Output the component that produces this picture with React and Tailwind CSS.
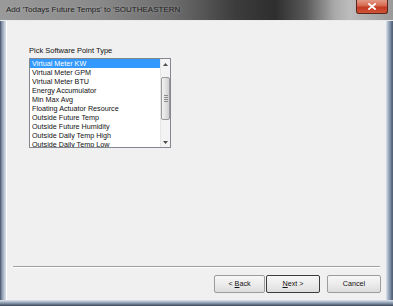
export default function App() {
  const items = [
    "Virtual Meter KW",
    "Virtual Meter GPM",
    "Virtual Meter BTU",
    "Energy Accumulator",
    "Min Max Avg",
    "Floating Actuator Resource",
    "Outside Future Temp",
    "Outside Future Humidity",
    "Outside Daily Temp High",
    "Outside Daily Temp Low",
  ];
  return (
    <div className="w-[393px] h-[306px] flex flex-col overflow-hidden bg-[#6f7f96] font-['Liberation_Sans',Arial,sans-serif] text-black">
      {/* Title bar */}
      <div className="h-[20px] flex items-start justify-between bg-[linear-gradient(90deg,#9a9a9a_0%,#8a8a8a_25%,#6a6a6a_45%,#3c3c3c_60%,#2e2e2e_70%,#5a5a5a_78%,#a8a8a8_85%,#bdbdbd_89%,#9a9a9a_100%)]">
        <div className="pl-[6px] pt-[5px] text-[8px] leading-[10px] text-[#1b1b1b] whitespace-nowrap [text-shadow:0_0_3px_rgba(255,255,255,0.35)]">
          Add 'Todays Future Temps' to 'SOUTHEASTERN
        </div>
        <div className="mr-[5px] w-[32px] h-[14px] rounded-b-[3px] border border-t-0 border-[#5c241b] bg-[linear-gradient(180deg,#e39a86_0%,#d5674f_45%,#c2391f_55%,#d0553a_100%)] flex items-center justify-center">
          <svg width="8" height="7" viewBox="0 0 8 7">
            <path d="M1 1 L7 6 M7 1 L1 6" stroke="#ffffff" strokeWidth="1.8" strokeLinecap="square" />
          </svg>
        </div>
      </div>
      {/* Body row */}
      <div className="flex flex-1 bg-[#e7ebf0] pt-[1px]">
        {/* Left frame */}
        <div className="w-[6px] bg-[linear-gradient(90deg,#4e5c70_0px,#5e6d83_1px,#8e9db2_2px,#b0bccb_4px,#d2d9e2_5px)]" />
        {/* Client */}
        <div className="w-[380px] h-[279px] bg-[#f0f0f0] border-l border-white flex flex-col">
          <div className="ml-[22px] mt-[25px] text-[7.5px] leading-[9px] whitespace-nowrap text-[#111]">
            Pick Software Point Type
          </div>
          <div className="ml-[22px] mt-[3px] w-[142px] h-[90px] border border-[#828790] bg-white flex">
            <div className="flex-1 overflow-hidden">
              {items.map((t, i) => (
                <div
                  key={t}
                  className={
                    i === 0
                      ? "h-[9px] leading-[9px] pl-[2px] text-[7.2px] whitespace-nowrap bg-[#3399ff] text-white"
                      : "h-[9px] leading-[9px] pl-[2px] text-[7.2px] whitespace-nowrap text-[#111]"
                  }
                >
                  {t}
                </div>
              ))}
            </div>
            <div className="w-[10px] bg-[#f3f3f3] border-l border-[#e6e6e6] flex flex-col items-center">
              <div className="h-[10px] flex items-center justify-center">
                <svg width="5" height="3" viewBox="0 0 5 3">
                  <path d="M0 3 L2.5 0 L5 3 Z" fill="#4d4d4d" />
                </svg>
              </div>
              <div className="mt-[8px] w-[9px] h-[43px] rounded-[2px] border border-[#9a9a9a] bg-[linear-gradient(90deg,#f2f2f2_0%,#e2e2e2_50%,#cfcfcf_100%)] flex flex-col items-center justify-center gap-[1px]">
                <div className="w-[4px] h-px bg-[#8a8a8a]" />
                <div className="w-[4px] h-px bg-[#8a8a8a]" />
                <div className="w-[4px] h-px bg-[#8a8a8a]" />
                <div className="w-[4px] h-px bg-[#8a8a8a]" />
              </div>
              <div className="flex-1" />
              <div className="h-[10px] flex items-center justify-center">
                <svg width="5" height="3" viewBox="0 0 5 3">
                  <path d="M0 0 L2.5 3 L5 0 Z" fill="#4d4d4d" />
                </svg>
              </div>
            </div>
          </div>
          <div className="mt-[118px] mx-[6px] h-px bg-[#a0a0a0]" />
          <div className="mx-[6px] h-px bg-white" />
          <div className="mt-[7px] flex justify-end pr-[5px] text-[7.2px] text-[#111]">
            <div className="w-[51px] h-[18px] rounded-[2px] border border-[#9c9c9c] bg-[linear-gradient(180deg,#f7f7f7_0%,#ececec_50%,#dddddd_100%)] flex items-center justify-center">
              &lt; <span className="underline ml-[2px]">B</span>ack
            </div>
            <div className="ml-[1px] w-[54px] h-[18px] rounded-[2px] border border-[#3c3c3c] bg-[linear-gradient(180deg,#f7f7f7_0%,#ececec_50%,#dddddd_100%)] flex items-center justify-center">
              <span className="underline">N</span>ext &gt;
            </div>
            <div className="ml-[7px] w-[54px] h-[18px] rounded-[2px] border border-[#9c9c9c] bg-[linear-gradient(180deg,#f7f7f7_0%,#ececec_50%,#dddddd_100%)] flex items-center justify-center">
              Cancel
            </div>
          </div>
        </div>
        {/* Right frame */}
        <div className="flex-1 bg-[linear-gradient(90deg,#dfe5ec_0px,#a9b6c7_2px,#8495ad_4px,#56647a_6px)]" />
      </div>
      {/* Bottom frame */}
      <div className="h-[6px] bg-[linear-gradient(180deg,#dfe5ec_0px,#a9b6c7_2px,#6f7f96_4px,#3b4658_6px)]" />
    </div>
  );
}
